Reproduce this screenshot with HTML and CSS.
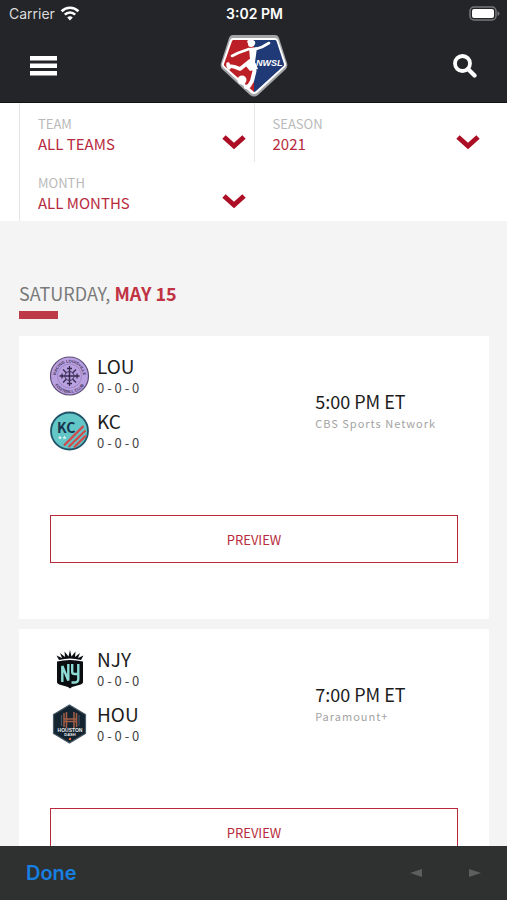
FILE: index.html
```
<!DOCTYPE html>
<html lang="en">
<head>
  <meta charset="UTF-8">
  <meta name="viewport" content="width=device-width, initial-scale=1.0">
  <title>NWSL Schedule</title>
  <link rel="stylesheet" href="styles.css">
</head>
<body>
  <header>
    <div class="status-bar">
      <div class="carrier">
        <span>Carrier</span>
        <svg width="20" height="15" viewBox="0 0 20 15" fill="none" stroke="#fff" stroke-width="2.6">
          <path d="M1.6 5.2a12 12 0 0 1 16.8 0M4.8 8.6a7.4 7.4 0 0 1 10.4 0"/>
          <path d="M10 14.4l-2.8-2.9a4 4 0 0 1 5.6 0z" fill="#fff" stroke="none"/>
        </svg>
      </div>
      <span class="clock">3:02 PM</span>
      <svg class="battery" width="31" height="15" viewBox="0 0 31 15">
        <rect x="1" y="1" width="26" height="13" rx="4" fill="none" stroke="#77787a" stroke-width="1.5"/>
        <rect x="3" y="3" width="22" height="9" rx="2" fill="#fff"/>
        <path d="M28.500 5v5q2-1 2-2.500t-2-2.500z" fill="#77787a"/>
      </svg>
    </div>
    <nav>
      <button class="icon-btn" aria-label="Menu">
        <svg width="28" height="20" viewBox="0 0 28 20" fill="#fff">
          <path d="M0 0h27v4.500H0zM0 7.500h27V12H0zM0 15h27v4.500H0z"/>
        </svg>
      </button>
      <a class="brand" href="#" aria-label="NWSL home">
        <svg width="68" height="64" viewBox="0 0 68 64">
          <path d="M13 1h42q3 0 4 3l8 25q1 3-1 6L38 61q-4 3-8 0L2 35q-2-3-1-6L9 4q1-3 4-3z" fill="#a3a5a8"/>
          <path d="M13 4h42q2 0 3 2l8 24q0 2-1 3L37 59q-3 2-6 0L3 33q-1-1-1-3L10 6q1-2 3-2z" fill="#fff"/>
          <path d="M13 6h21v52L4.500 32q-1-1-.5-2L12 7z" fill="#bd1f26"/>
          <path d="M34 6h21q1 0 1.500 1L64 30q.5 1-.5 2L36 57q-1 1-2 1z" fill="#203a77"/>
          <g fill="none" stroke="#fff" stroke-linecap="round" stroke-linejoin="round">
            <path d="M12 22l6-3 11-4M36 15l6-2 7-4" stroke-width="2.600"/>
            <path d="M30 27l-10 8-5-2-7-1.500M8 30l1 4" stroke-width="3.600"/>
            <path d="M33 29l1.500 8-2.500 10-3 5-3 1" stroke-width="4"/>
          </g>
          <path d="M29 14l8-1-1 8-1 7 3 7-8 2-5-6 5-6z" fill="#fff"/>
          <path d="M27 7q3-3 6-1 3 1 2 4t-4 3-3-3z" fill="#fff"/>
          <circle cx="22" cy="46" r="4.500" fill="#fff"/>
          <text x="36" y="32" class="brand-text">NWSL</text>
        </svg>
      </a>
      <button class="icon-btn search-btn" aria-label="Search">
        <svg width="24" height="24" viewBox="0 0 24 24" fill="none" stroke="#fff">
          <circle cx="9.500" cy="9.500" r="7.500" stroke-width="3.800"/>
          <path d="M15 15l6.500 6.500" stroke-width="4.200" stroke-linecap="round"/>
        </svg>
      </button>
    </nav>
  </header>

  <main>
    <form class="filters">
      <div class="filter">
        <label for="team">TEAM</label>
        <select id="team"><option>ALL TEAMS</option></select>
        <svg class="chevron" viewBox="0 0 24 16"><path d="M2 3l10 9 10-9"/></svg>
      </div>
      <div class="filter">
        <label for="season">SEASON</label>
        <select id="season"><option>2021</option></select>
        <svg class="chevron" viewBox="0 0 24 16"><path d="M2 3l10 9 10-9"/></svg>
      </div>
      <div class="filter">
        <label for="month">MONTH</label>
        <select id="month"><option>ALL MONTHS</option></select>
        <svg class="chevron" viewBox="0 0 24 16"><path d="M2 3l10 9 10-9"/></svg>
      </div>
    </form>

    <section class="schedule">
      <h2>SATURDAY, <strong>MAY 15</strong></h2>

      <article class="game">
        <div class="game-info">
          <div class="teams">
            <div class="team">
              <svg width="40" height="40" viewBox="0 0 40 40">
                <defs>
                  <path id="ringTop" d="M6 20a13.500 13.500 0 0 1 27 0"/>
                  <path id="ringBottom" d="M2.500 20a17 17 0 0 0 34 0"/>
                </defs>
                <circle cx="19.500" cy="20" r="19" fill="#b9a0e0" stroke="#5b4a75" stroke-width="1.200"/>
                <circle cx="19.500" cy="20" r="12" fill="none" stroke="#8d78b0" stroke-width=".6"/>
                <text class="ring-text"><textPath href="#ringTop" startOffset="50%">RACING LOUISVILLE</textPath></text>
                <text class="ring-text"><textPath href="#ringBottom" startOffset="50%">FOOTBALL CLUB</textPath></text>
                <g stroke="#352a4f" stroke-width="1.300" fill="none">
                  <path d="M19.500 10v20M9.500 20h20M13 13.500l13 13M26 13.500l-13 13"/>
                  <path d="M17 12.500h5M17 27.500h5M12 17.500v5M27 17.500v5"/>
                </g>
                <circle cx="19.500" cy="20" r="4.500" fill="#b9a0e0" stroke="#352a4f"/>
                <path d="M19.500 16v8M15.500 20h8" stroke="#352a4f" stroke-width="1.500"/>
              </svg>
              <div>
                <h3>LOU</h3>
                <p class="record">0 - 0 - 0</p>
              </div>
            </div>
            <div class="team">
              <svg width="40" height="40" viewBox="0 0 40 40">
                <circle cx="19.500" cy="20" r="18.500" fill="#62c6c6" stroke="#1f5368" stroke-width="1.800"/>
                <path d="M14 34.500L33.500 15M18.500 36L35.500 19.500M24 36.500L36 24.500" stroke="#d14a4c" stroke-width="2.400"/>
                <text x="7" y="22" class="kc-text">KC</text>
                <path d="M10 24.500l.6 1.400 1.400.1-1.100 1 .4 1.400-1.300-.8-1.300.8.4-1.400-1.100-1 1.400-.1zM14.500 24.500l.6 1.400 1.400.1-1.100 1 .4 1.400-1.300-.8-1.300.8.4-1.400-1.100-1 1.400-.1z" fill="#e8f5f5"/>
              </svg>
              <div>
                <h3>KC</h3>
                <p class="record">0 - 0 - 0</p>
              </div>
            </div>
          </div>
          <div class="broadcast">
            <p class="time">5:00 PM ET</p>
            <p class="network">CBS Sports Network</p>
          </div>
        </div>
        <button class="preview-btn">PREVIEW</button>
      </article>

      <article class="game">
        <div class="game-info">
          <div class="teams">
            <div class="team">
              <svg width="40" height="40" viewBox="0 0 40 40">
                <path d="M9 11L6.500 6.500 12 9 10 4l5 4-.5-5.500 4 5L20 1l1.500 6.500 4-5L25 8l5-4-2 5 5.500-2.500L31 11q-11-3-22 0z" fill="#0b0e11"/>
                <path d="M7 12.500q13-3 26 0V33q0 2-4 3l-7 2-2 1.500-2-1.500-7-2q-4-1-4-3z" fill="#0b0e11"/>
                <path d="M12.300 33V17l6 14.500V15" fill="none" stroke="#8edbd6" stroke-width="2.400"/>
                <path d="M22.200 15v8q0 2 2.500 2H28M28.300 15v15q0 3.500-4 3.500H21.500" fill="none" stroke="#8edbd6" stroke-width="2.400"/>
              </svg>
              <div>
                <h3>NJY</h3>
                <p class="record">0 - 0 - 0</p>
              </div>
            </div>
            <div class="team">
              <svg width="40" height="40" viewBox="0 0 40 40">
                <path d="M19.500 1l16 9.500v19L19.500 39l-16-9.500v-19z" fill="#142330" stroke="#4b5c69" stroke-width="1.200"/>
                <path d="M14 9v14M16.500 8v16M24 8v16M26.500 9v14M14 15h12M14 17.500h12" stroke="#a35f46" stroke-width="1.500" fill="none"/>
                <path d="M11.500 11v11M29 11v11" stroke="#455260" stroke-width="1.200"/>
                <text x="20" y="28" class="houston-text">HOUSTON</text>
                <text x="20" y="32" class="dash-text">DASH</text>
                <circle cx="20" cy="35" r="1.200" fill="#ea6a37"/>
              </svg>
              <div>
                <h3>HOU</h3>
                <p class="record">0 - 0 - 0</p>
              </div>
            </div>
          </div>
          <div class="broadcast">
            <p class="time">7:00 PM ET</p>
            <p class="network">Paramount+</p>
          </div>
        </div>
        <button class="preview-btn">PREVIEW</button>
      </article>
    </section>
  </main>

  <footer>
    <button class="done-btn">Done</button>
    <div class="pager">
      <button aria-label="Back"><svg width="12" height="10" viewBox="0 0 12 10"><path d="M12 1v8L0 5z"/></svg></button>
      <button aria-label="Forward"><svg width="12" height="10" viewBox="0 0 12 10"><path d="M0 1v8l12-4z"/></svg></button>
    </div>
  </footer>
</body>
</html>
```
FILE: styles.css
```
* {
  box-sizing: border-box;
}

body {
  margin: 0;
  height: 100vh;
  display: flex;
  flex-direction: column;
  background: #f4f4f4;
  color: #1c1c1c;
  font-family: "Noto Sans CJK SC", "Noto Sans", sans-serif;
}

h2, h3, p {
  margin: 0;
  font-weight: normal;
}

button {
  padding: 0;
  border: none;
  background: none;
  font-family: inherit;
  cursor: pointer;
}

svg {
  display: block;
  flex-shrink: 0;
}

/* Header */
header {
  flex-shrink: 0;
  background: #242528;
  border-bottom: 1px solid #111214;
}

.status-bar {
  display: grid;
  grid-template-columns: 1fr auto 1fr;
  align-items: center;
  height: 27px;
  padding: 0 7px 0 9px;
  color: #fff;
  font-family: Inter, "Liberation Sans", sans-serif;
  font-size: 14px;
}

.carrier {
  display: flex;
  align-items: center;
  gap: 5px;
  color: #dcdcdc;
}

.clock {
  font-weight: 600;
}

.battery {
  justify-self: end;
}

nav {
  display: grid;
  grid-template-columns: 1fr auto 1fr;
  align-items: center;
  height: 75px;
  padding: 2px 30px 0;
}

.icon-btn {
  justify-self: start;
}

.search-btn {
  justify-self: end;
}

.brand-text {
  fill: #fff;
  font: italic bold 9px "Liberation Sans", sans-serif;
}

/* Filters */
.filters {
  display: grid;
  grid-template-columns: 1fr 1fr;
  padding: 0 19px;
  background: #fff;
}

.filter {
  position: relative;
  height: 59px;
  padding: 11px 0 0 18px;
  border-left: 1px solid #e6e6e6;
}

.filter label {
  display: block;
  color: #b9b9b9;
  font-size: 13px;
  line-height: 20px;
}

.filter select {
  display: block;
  width: 100%;
  height: 20px;
  padding: 0;
  border: none;
  background: none;
  appearance: none;
  color: #b72b3d;
  font-family: inherit;
  font-size: 15px;
  line-height: 20px;
}

.chevron {
  position: absolute;
  top: 31px;
  right: 8px;
  width: 24px;
  height: 16px;
  fill: none;
  stroke: #ac0f25;
  stroke-width: 5;
  pointer-events: none;
}

/* Schedule */
main {
  flex: 1;
  min-height: 0;
  overflow-y: auto;
  scrollbar-width: none;
}

.schedule {
  padding: 58px 18px 0 19px;
}

.schedule h2 {
  margin-bottom: 17px;
  color: #7a7a7a;
  font-size: 18px;
  line-height: 28px;
}

.schedule h2 strong {
  color: #c03343;
}

.schedule h2::after {
  content: "";
  display: block;
  width: 39px;
  height: 8px;
  margin-top: 4px;
  background: #bd3a49;
}

.game {
  margin-bottom: 10px;
  padding: 20px 31px 56px;
  background: #fff;
}

.game-info {
  display: grid;
  grid-template-columns: 13fr 7fr;
  align-items: start;
  margin-bottom: 64px;
}

.team {
  display: flex;
  gap: 7px;
  height: 40px;
}

.team + .team {
  margin-top: 15px;
}

.team h3 {
  font-size: 19px;
  line-height: 20px;
}

.record {
  color: #444;
  font-size: 13px;
  line-height: 24px;
}

.time {
  font-size: 18px;
  line-height: 28px;
}

.broadcast {
  padding-top: 31px;
}

.network {
  color: #a3a3a3;
  font-size: 11px;
  letter-spacing: 1px;
  line-height: 16px;
}

.preview-btn {
  display: block;
  width: 100%;
  height: 48px;
  border: 1px solid #b72b3d;
  color: #b72b3d;
  font-size: 13px;
}

/* Team crests */
.ring-text {
  fill: #3d3159;
  font: bold 4px "Liberation Sans", sans-serif;
  text-anchor: middle;
}

.kc-text {
  fill: #17344f;
  font: bold 14px "Noto Sans CJK SC", sans-serif;
}

.houston-text,
.dash-text {
  fill: #e8eaec;
  font: bold 5px "Liberation Sans", sans-serif;
  text-anchor: middle;
}

.dash-text {
  font-size: 4px;
}

/* Browser toolbar */
footer {
  display: flex;
  align-items: center;
  justify-content: space-between;
  flex-shrink: 0;
  height: 54px;
  padding: 0 26px;
  background: #2f3030;
}

.done-btn {
  color: #167fe0;
  font-family: Inter, "Liberation Sans", sans-serif;
  font-size: 20px;
  font-weight: 600;
}

.pager {
  display: flex;
  gap: 47px;
  fill: #5d5e5e;
}
```
